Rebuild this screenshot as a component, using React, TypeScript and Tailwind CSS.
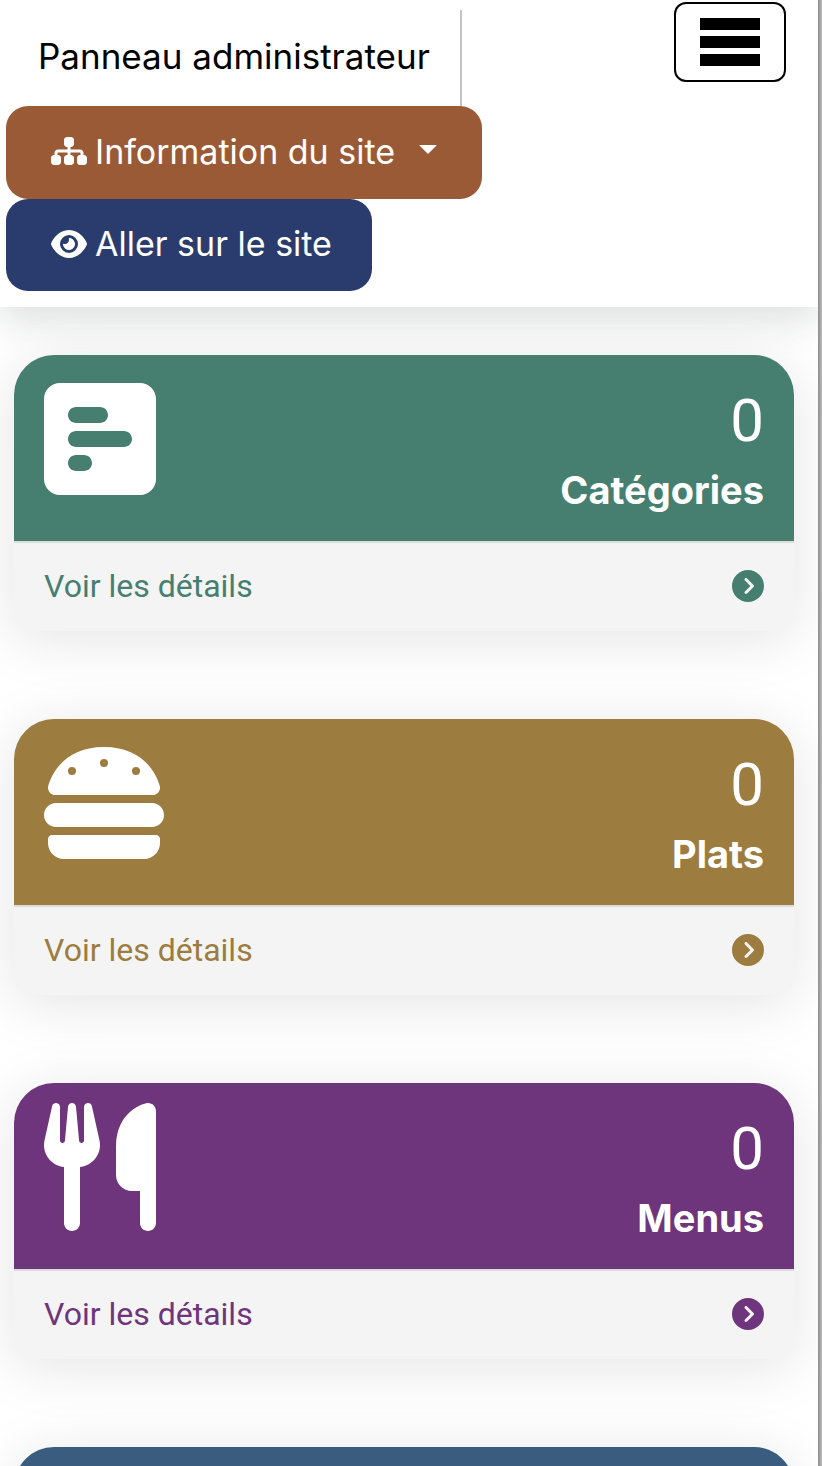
import React from "react";
import type { IconType } from "react-icons";
import {
  FaBurger,
  FaCircleChevronRight,
  FaEye,
  FaSitemap,
  FaSquarePollHorizontal,
  FaUtensils,
} from "react-icons/fa6";

type Stat = {
  label: string;
  count: number;
  Icon: IconType;
  iconClass: string;
  bg: string;
  text: string;
};

const stats: Stat[] = [
  {
    label: "Catégories",
    count: 0,
    Icon: FaSquarePollHorizontal,
    iconClass: "w-28",
    bg: "bg-[#467f6f]",
    text: "text-[#467f6f]",
  },
  {
    label: "Plats",
    count: 0,
    Icon: FaBurger,
    iconClass: "w-32 -ml-1",
    bg: "bg-[#9c7c3f]",
    text: "text-[#9c7c3f]",
  },
  {
    label: "Menus",
    count: 0,
    Icon: FaUtensils,
    iconClass: "w-28",
    bg: "bg-[#6f357c]",
    text: "text-[#6f357c]",
  },
];

function StatCard({ label, count, Icon, iconClass, bg, text }: Stat) {
  return (
    <section className="shrink-0 rounded-t-[40px] rounded-b-2xl bg-[#f4f4f4] shadow-[0_8px_60px_rgba(0,0,0,0.11)]">
      <div
        className={`flex h-[186px] justify-between rounded-t-[40px] px-[30px] pt-5 text-white ${bg}`}
      >
        <Icon className={`h-32 ${iconClass}`} aria-hidden="true" />
        <div className="flex flex-col items-end pt-2">
          <p className="font-[Roboto,sans-serif] text-[60px] leading-[76px]">{count}</p>
          <h2 className="text-[38px] leading-[62px] font-bold">{label}</h2>
        </div>
      </div>
      <a
        href="#"
        className={`flex h-[90px] items-center justify-between border-t-2 border-[#dcdcdc] px-[30px] pb-[3px] font-[Roboto,sans-serif] text-[32px] ${text}`}
      >
        <span>Voir les détails</span>
        <FaCircleChevronRight className="size-8" aria-hidden="true" />
      </a>
    </section>
  );
}

export default function App() {
  return (
    <div className="flex h-screen overflow-hidden bg-white font-[Inter,sans-serif]">
      <div className="flex min-w-0 flex-1 flex-col overflow-hidden">
        <header className="relative shrink-0 bg-white pb-4 pl-[6px] shadow-[0_16px_32px_rgba(20,40,30,0.13)]">
          <div className="flex items-start justify-between pr-8">
            <div className="mt-[10px] flex h-24 items-center border-r-2 border-[#c4c4c4] pr-[30px] pb-1 pl-8">
              <h1 className="text-[35px] whitespace-nowrap text-black">Panneau administrateur</h1>
            </div>
            <button
              type="button"
              aria-label="Menu"
              className="mt-[2px] flex h-20 w-28 flex-col items-center justify-center gap-[6px] rounded-xl border-2 border-black"
            >
              <span className="h-3 w-[60px] bg-black" />
              <span className="h-3 w-[60px] bg-black" />
              <span className="h-3 w-[60px] bg-black" />
            </button>
          </div>
          <nav className="flex flex-col items-start">
            <button
              type="button"
              className="flex h-[93px] items-center rounded-[22px] bg-[#9b5a36] px-[45px] pb-[3px] text-[34px] whitespace-nowrap text-white"
            >
              <FaSitemap className="mr-2 h-8 w-9" aria-hidden="true" />
              Information du site
              <span
                aria-hidden="true"
                className="mb-1 ml-6 border-x-9 border-t-9 border-x-transparent border-t-white"
              />
            </button>
            <a
              href="#"
              className="flex h-[92px] items-center rounded-[22px] bg-[#2a3c6e] pr-10 pb-[3px] pl-[45px] text-[34px] whitespace-nowrap text-white"
            >
              <FaEye className="mr-2 h-8 w-9" aria-hidden="true" />
              Aller sur le site
            </a>
          </nav>
        </header>
        <main className="flex min-h-0 flex-1 flex-col gap-[88px] pt-12 pr-6 pl-[14px]">
          {stats.map((stat) => (
            <StatCard key={stat.label} {...stat} />
          ))}
          <section className="min-h-0 flex-1">
            <div className="h-[186px] rounded-t-[40px] bg-[#3a5c7e] shadow-[0_8px_60px_rgba(0,0,0,0.11)]" />
          </section>
        </main>
      </div>
      <div className="w-1 bg-linear-to-r from-[#8c8c8c] to-[#bcbcbc]" />
    </div>
  );
}
